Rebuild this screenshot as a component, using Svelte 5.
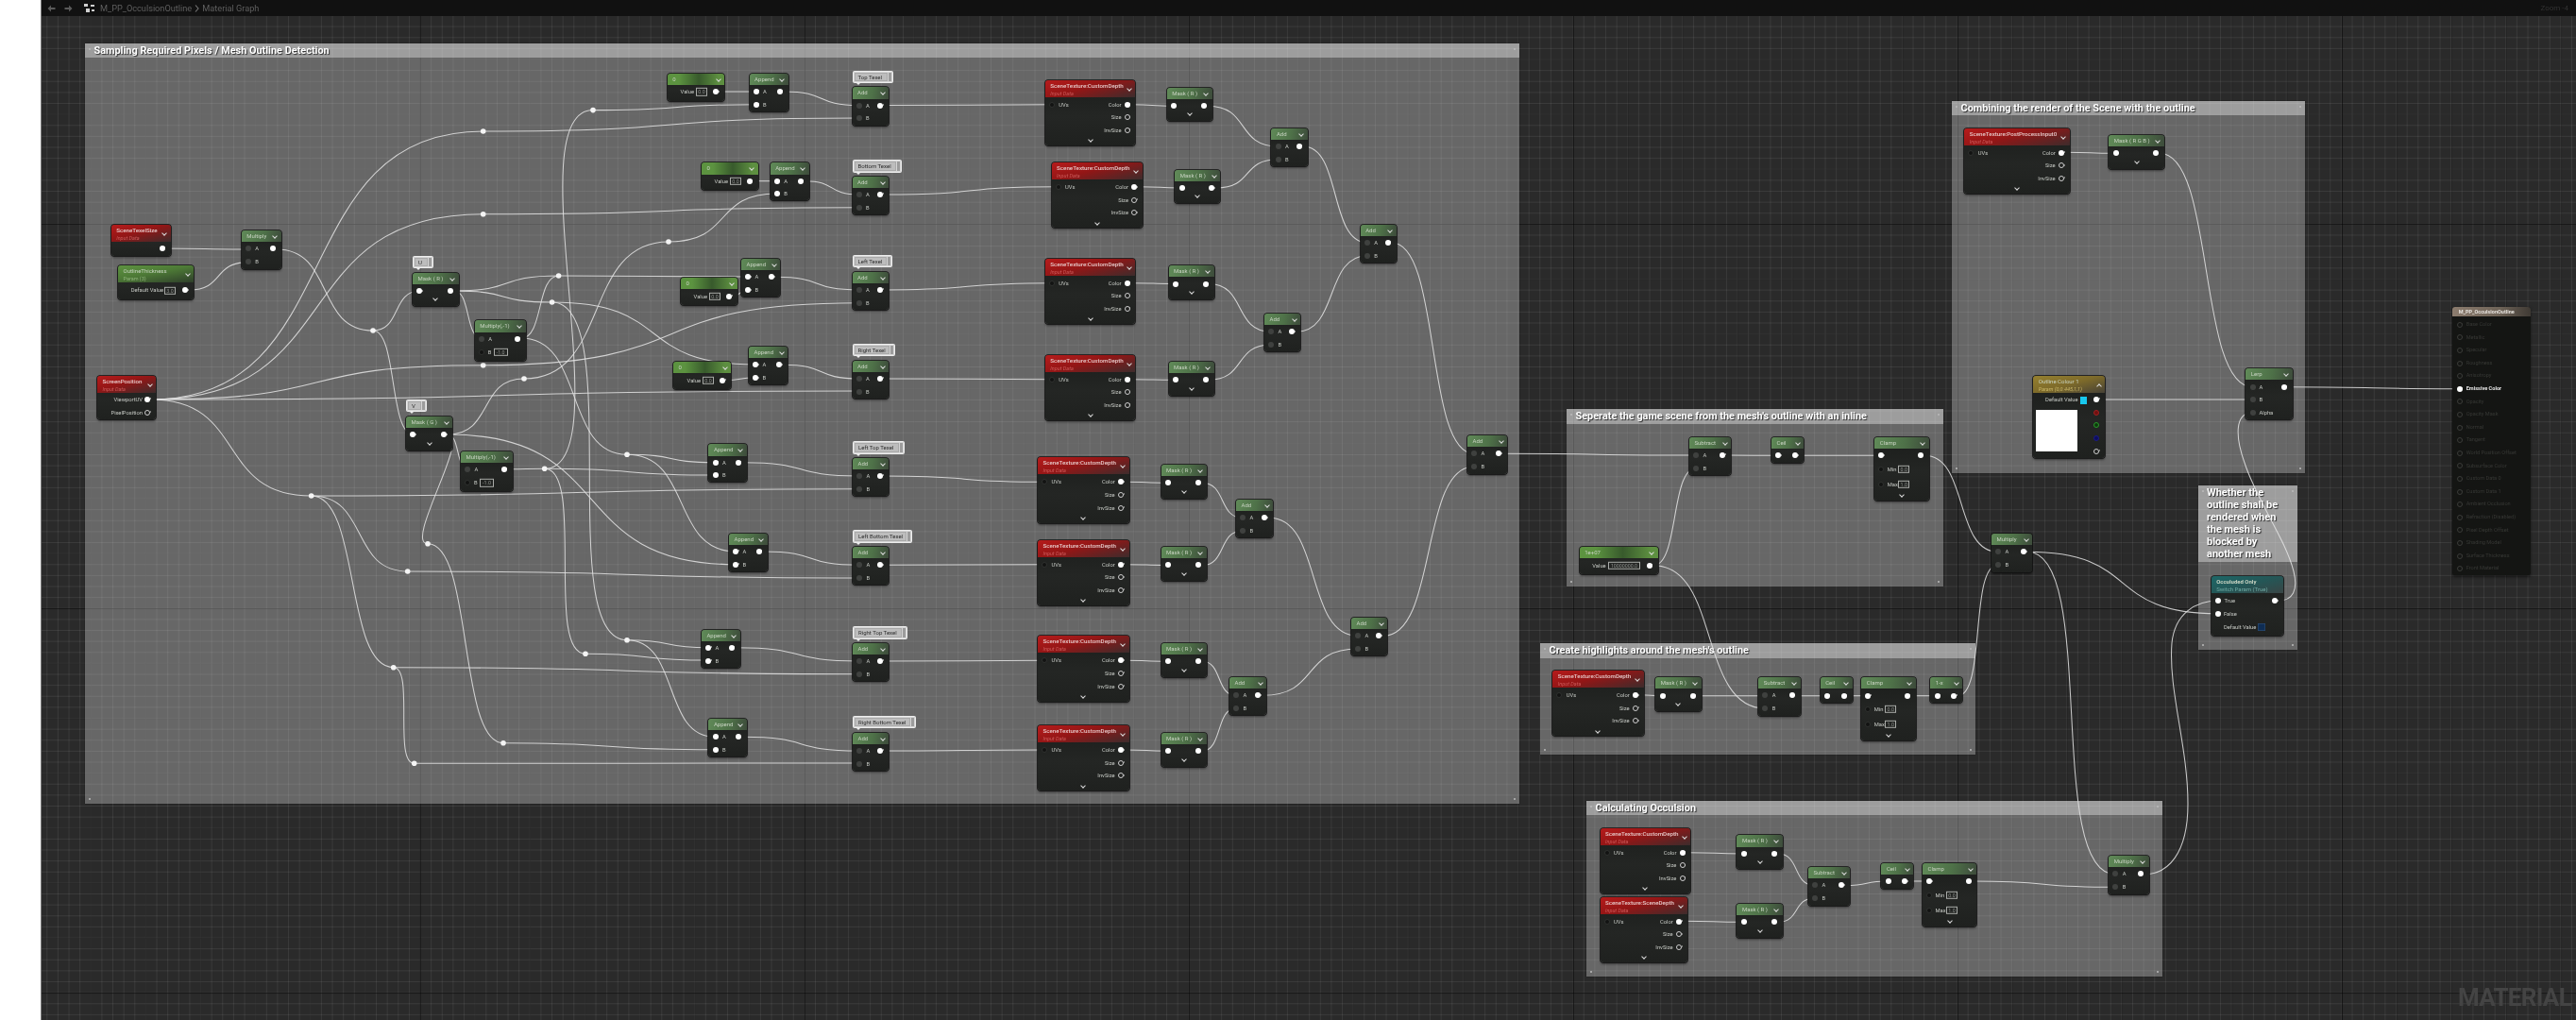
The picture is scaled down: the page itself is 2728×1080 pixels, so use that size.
<script>
  const comments = [
    { x: 90, y: 46, r: 1609, b: 851, hb: 61, s: 'Sampling Required Pixels / Mesh Outline Detection' },
    { x: 1659, y: 433, r: 2058, b: 621, hb: 449, s: "Seperate the game scene from the mesh's outline with an inline" },
    { x: 1631, y: 681, r: 2092, b: 799, hb: 697, s: "Create highlights around the mesh's outline" },
    { x: 1680, y: 848, r: 2290, b: 1034, hb: 863, s: 'Calculating Occulsion' },
    { x: 2067, y: 107, r: 2441, b: 501, hb: 122, s: 'Combining the render of the Scene with the outline' },
    { x: 2328, y: 514, r: 2433, b: 688, hb: 595, s: 'Whether the outline shall be rendered when the mesh is blocked by another mesh', big: true }
  ];

  const bubbles = [
    { x: 902.5, y: 74.7, r: 946.4, s: 'Top Texel' }, { x: 902.5, y: 169.3, r: 954.6, s: 'Bottom Texel' },
    { x: 902.5, y: 270, r: 945, s: 'Left Texel' }, { x: 902.5, y: 364, r: 948, s: 'Right Texel' },
    { x: 903, y: 467.3, r: 958, s: 'Left Top Texel' }, { x: 903, y: 561.3, r: 966.4, s: 'Left Bottom Texel' },
    { x: 903, y: 663.3, r: 961, s: 'Right Top Texel' }, { x: 903, y: 758, r: 969.6, s: 'Right Bottom Texel' },
    { x: 437, y: 271, r: 459, s: 'U' }, { x: 430, y: 423, r: 451.7, s: 'V' }
  ];

  const base = (hd, title, x, y, r, b, extra = {}) => ({ hd, title, x, y, w: r - x, h: b - y, hh: 12.3, pins: [], labels: [], boxes: [], chev: [], ...extra });

  function ab(title, x, y, r, b, fill = false) {
    const n = base('green', title, x, y, r, b);
    const ay = y + 19.3, by = y + 33;
    const t = fill ? 'o' : 'd';
    n.pins = [{ x: x + 7.2, y: ay, t }, { x: x + 7.2, y: by, t }, { x: r - 9, y: ay, t: 'o' }];
    n.labels = [{ x: x + 14.5, y: ay, s: 'A' }, { x: x + 14.5, y: by, s: 'B' }];
    return n;
  }
  function mask(title, x, y, r, b) {
    const n = base('green', title, x, y, r, b);
    const py = y + 19.5;
    n.pins = [{ x: x + 7.3, y: py, t: 'o' }, { x: r - 9, y: py, t: 'o' }];
    n.chev = [{ x: (x + r) / 2, y: b - 7 }];
    return n;
  }
  const one = (title, x, y) => {
    const n = base('green', title, x, y, x + 34, y + 27);
    n.pins = [{ x: x + 7.3, y: y + 19.5, t: 'o' }, { x: x + 25, y: y + 19.5, t: 'o' }];
    return n;
  };
  function clamp(x, y) {
    const n = base('green', 'Clamp', x, y, x + 57.4, y + 67);
    n.pins = [{ x: x + 7, y: y + 19.5, t: 'o' }, { x: x + 48.5, y: y + 19.5, t: 'o' }, { x: x + 7, y: y + 34, t: 'k' }, { x: x + 7, y: y + 50, t: 'k' }];
    n.labels = [{ x: x + 13.5, y: y + 34, s: 'Min' }, { x: x + 13.5, y: y + 50, s: 'Max' }];
    n.boxes = [{ x: x + 25, y: y + 34, w: 12, s: '0.0' }, { x: x + 25, y: y + 50, w: 12, s: '1.0' }];
    n.chev = [{ x: x + 29, y: y + 62 }];
    return n;
  }
  function st(title, x, y, r) {
    const n = base('red', title, x, y, r, y + 69.3, { hh: 18, sub: 'Input Data', pad: true });
    n.pins = [{ x: x + 7, y: y + 26, t: 'k' }, { x: r - 8.5, y: y + 26, t: 'o' }, { x: r - 8.5, y: y + 39.6, t: 'h' }, { x: r - 8.5, y: y + 53.3, t: 'h' }];
    n.labels = [{ x: x + 14.5, y: y + 26, s: 'UVs' }, { r: r - 15, y: y + 26, s: 'Color' }, { r: r - 15, y: y + 39.6, s: 'Size' }, { r: r - 15, y: y + 53.3, s: 'InvSize' }];
    n.chev = [{ x: (x + r) / 2, y: y + 64.5 }];
    return n;
  }
  function cnst(x, y, r, b, title, val, bx, bw) {
    const n = base('cnst', title, x, y, r, b);
    const py = y + 19.5;
    n.pins = [{ x: r - 9, y: py, t: 'o' }];
    n.labels = [{ r: bx - 2, y: py, s: 'Value' }];
    n.boxes = [{ x: bx, y: py, w: bw, s: val }];
    return n;
  }
  function mul1(x, y, r, b) {
    const n = ab('Multiply(,-1)', x, y, r, b);
    n.pins[1].t = 'k'; n.pins[1].y = y + 33.7;
    n.labels[1] = { x: x + 14, y: y + 33.7, s: 'B' };
    n.boxes = [{ x: x + 20, y: y + 33.7, w: 15, s: '-1.0' }];
    return n;
  }
  const M = 'Mask ( R )', CD = 'SceneTexture:CustomDepth';

  const stx = base('red', 'SceneTexelSize', 117.7, 237.7, 181, 270.7, { hh: 18, sub: 'Input Data', pad: true });
  stx.pins = [{ x: 172, y: 263, t: 'o' }];
  const oth = base('green2', 'OutlineThickness', 125, 281, 205, 316.7, { hh: 18, sub: 'Param (3)', subc: 'gsub', pad: true });
  oth.pins = [{ x: 196, y: 307, t: 'o' }];
  oth.labels = [{ x: 138.7, y: 307.3, s: 'Default Value' }];
  oth.boxes = [{ x: 174, y: 307.5, w: 12, s: '3.0' }];
  const spos = base('red', 'ScreenPosition', 103, 397.7, 165, 444, { hh: 18, sub: 'Input Data', pad: true });
  spos.pins = [{ x: 156, y: 423, t: 'o' }, { x: 156, y: 436.7, t: 'h' }];
  spos.labels = [{ r: 151, y: 423, s: 'ViewportUV' }, { r: 151, y: 436.7, s: 'PixelPosition' }];
  const ppi = st('SceneTexture:PostProcessInput0', 2080.3, 135.7, 2191.7);
  const col = base('gold', 'Outline Colour 1', 2153.3, 397.7, 2229.3, 485, { hh: 18, sub: 'Param (0,0.445,1,1)', subc: 'ysub', pad: true, up: true });
  col.pins = [{ x: 2220.3, y: 423, t: 'o' }, { x: 2220.3, y: 436.7, t: 'r' }, { x: 2220.3, y: 450.3, t: 'g' }, { x: 2220.3, y: 464, t: 'b' }, { x: 2220.3, y: 477.7, t: 'h' }];
  col.labels = [{ r: 2200.5, y: 423.5, s: 'Default Value' }];
  const lerp = base('green', 'Lerp', 2378.3, 390, 2427.7, 444);
  lerp.pins = [{ x: 2385.7, y: 409.7, t: 'd' }, { x: 2385.7, y: 423, t: 'd' }, { x: 2385.7, y: 436.7, t: 'd' }, { x: 2419, y: 409.7, t: 'o' }];
  lerp.labels = [{ x: 2392.5, y: 409.7, s: 'A' }, { x: 2392.5, y: 423, s: 'B' }, { x: 2392.5, y: 436.7, s: 'Alpha' }];
  const sw = base('teal', 'Occuluded Only', 2341.7, 610, 2418.3, 672.8, { hh: 18, sub: 'Switch Param (True)', subc: 'tsub', pad: true, noch: true, bold: true });
  sw.pins = [{ x: 2348.7, y: 636, t: 'o' }, { x: 2348.7, y: 649.8, t: 'o' }, { x: 2409.3, y: 636, t: 'o' }];
  sw.labels = [{ x: 2355.5, y: 636, s: 'True' }, { x: 2355, y: 649.8, s: 'False' }, { x: 2355, y: 664, s: 'Default Value' }];

  const nodes = [
    stx, oth, spos,
    ab('Multiply', 255.7, 244, 298, 285),
    mask('Mask ( R )', 437, 288.7, 485.7, 323.7), mask('Mask ( G )', 430, 440.7, 479, 476.7),
    mul1(502.7, 339.3, 557, 382), mul1(488, 477.7, 542.7, 520),
    cnst(706.8, 77.7, 767.5, 106.7, '0', '0.0', 737, 12), cnst(742.9, 172.3, 803, 201.3, '0', '0.0', 773, 12),
    cnst(721, 294, 781, 323, '0', '0.0', 751, 12), cnst(713, 383, 774, 412, '0', '0.0', 744, 12),
    ab('Append', 793.6, 77.7, 834.6, 117.7, true), ab('Append', 815.7, 172.3, 856.8, 212.3, true),
    ab('Append', 785, 274, 826, 314, true), ab('Append', 793, 367, 834, 407, true),
    ab('Append', 750.4, 470.3, 791, 510.3, true), ab('Append', 772, 564.7, 812.9, 604.7, true),
    ab('Append', 742.9, 666.7, 783.6, 706.7, true), ab('Append', 750.4, 761, 791, 801, true),
    ...[92.3, 186.7, 287.7, 381.6].map((y) => ab('Add', 902.5, y, 941.4, y + 40.3)),
    ...[484.7, 579, 680.7, 775.7].map((y) => ab('Add', 903, y, 941, y + 40.3)),
    st(CD, 1106.8, 84.7, 1202.5), st(CD, 1113.6, 172, 1210), st(CD, 1106.8, 273.7, 1202.5), st(CD, 1106.8, 375.7, 1202.5),
    ...[484.3, 571.7, 673.3, 768].map((y) => st(CD, 1099, y, 1195.7)),
    mask(M, 1235.7, 92.7, 1283.6, 127.7), mask(M, 1244.3, 179.7, 1292.5, 214.7), mask(M, 1237.5, 281, 1285.7, 316.7), mask(M, 1237.5, 382.7, 1285.7, 418.7),
    mask(M, 1229.6, 491.7, 1278, 527.7), mask(M, 1229.6, 578.7, 1278, 615), mask(M, 1229.6, 680.7, 1278, 716.7), mask(M, 1229.6, 775.7, 1278, 812),
    ab('Add', 1346.4, 135.7, 1384.6, 176), ab('Add', 1339, 332, 1377, 372.3), ab('Add', 1440.7, 237.7, 1478.6, 278),
    ab('Add', 1309, 529, 1348, 569), ab('Add', 1302, 717, 1341, 757), ab('Add', 1431, 654, 1469, 694),
    ab('Add', 1554, 461, 1596, 501.5),
    ab('Subtract', 1789, 462.7, 1833.3, 503), one('Ceil', 1876, 462.7), clamp(1985.3, 462.7),
    cnst(1672.7, 579, 1756, 608.3, '1e+07', '10000000.0', 1702.7, 34.6),
    st(CD, 1644.3, 710, 1740.7), mask(M, 1753.3, 717, 1801.7, 752.7), ab('Subtract', 1862.3, 717, 1907, 758),
    one('Ceil', 1927.7, 717), clamp(1971.3, 717), one('1-x', 2044.3, 717),
    ab('Multiply', 2109, 565, 2152, 605.5),
    st(CD, 1694.5, 876.7, 1790.4), st('SceneTexture:SceneDepth', 1694.5, 949.7, 1786.7),
    mask(M, 1839.4, 884.3, 1888, 920), mask(M, 1839.4, 956.7, 1888, 992.7),
    ab('Subtract', 1914.9, 918, 1959.4, 958.7), one('Ceil', 1992.4, 913.7), clamp(2036, 913.7),
    ab('Multiply', 2233.3, 906, 2275.7, 947.3),
    ppi, mask('Mask ( R G B )', 2233.3, 142.7, 2292, 179),
    col, lerp, sw
  ];

  const resultLabels = ['Base Color', 'Metallic', 'Specular', 'Roughness', 'Anisotropy', 'Emissive Color', 'Opacity', 'Opacity Mask', 'Normal', 'Tangent', 'World Position Offset', 'Subsurface Color', 'Custom Data 0', 'Custom Data 1', 'Ambient Occlusion', 'Refraction (Disabled)', 'Pixel Depth Offset', 'Shading Model', 'Surface Thickness', 'Front Material'];

  const dots = [[511.7, 139], [628, 116.6], [511.7, 226.7], [708, 256], [395, 350], [591.6, 292], [584.6, 320], [511.7, 386.7], [555, 401], [329.7, 525], [431.7, 605], [453, 575.7], [576.7, 496.3], [664, 481.3], [664, 677.7], [620, 692.3], [416.7, 706.7], [438.7, 808.3], [533, 786.7]];

  const V = [160, 423];
  const wires = [
    [172, 263, 262.7, 264], [200, 307, 262.7, 277.7], [293, 264, 395, 350], [395, 350, 444.7, 308], [395, 350, 437.7, 460],
    [...V, 511.7, 139], [...V, 511.7, 226.7], [...V, 511.7, 386.7], [...V, 910, 414], [...V, 329.7, 525],
    [511.7, 139, 910, 125], [511.7, 226.7, 910, 219.7], [511.7, 386.7, 910, 320.7],
    [329.7, 525, 910, 517.7], [329.7, 525, 431.7, 605], [431.7, 605, 910, 612], [329.7, 525, 416.7, 706.7], [416.7, 706.7, 910, 713.7], [416.7, 706.7, 438.7, 808.3], [438.7, 808.3, 910, 808],
    [481, 308, 510, 358], [481, 308, 584.6, 320], [481, 308, 591.6, 292], [552, 358, 591.6, 292], [552, 358, 664, 481.3],
    [584.6, 320, 800, 386], [584.6, 320, 664, 677.7], [591.6, 292, 792, 293],
    [474, 460, 555, 401], [555, 401, 708, 256], [708, 256, 822.9, 205], [474, 460, 779, 597.7], [474, 460, 495.7, 496.7], [474, 460, 453, 575.7], [453, 575.7, 533, 786.7], [533, 786.7, 757, 793.7],
    [538, 496.7, 576.7, 496.3], [576.7, 496.3, 628, 116.6], [628, 116.6, 800.7, 110.7], [576.7, 496.3, 757, 503], [576.7, 496.3, 620, 692.3], [620, 692.3, 750, 699],
    [664, 481.3, 757, 489.7], [664, 481.3, 779.3, 584], [664, 677.7, 750, 685.7], [664, 677.7, 757, 780.3],
    [763, 97, 800.7, 97], [799, 191.7, 822.9, 191.7], [775, 313.5, 792, 307.5], [768, 402.5, 800, 400],
    [829.7, 97, 910, 111.6], [852, 191.7, 910, 206], [821, 293.3, 910, 307], [829, 386.3, 910, 400.9], [786.5, 489.7, 910, 504], [808.3, 584, 910, 598.3], [779.4, 685.7, 910, 700], [786.5, 780.3, 910, 795],
    [936, 111.6, 1114, 110.7], [936, 206, 1121, 197.7], [936, 307, 1114, 299.7], [936, 400.9, 1114, 401.7], [936, 504, 1106, 510.3], [936, 598.3, 1106, 597.7], [936, 700, 1106, 699.3], [936, 795, 1106, 794],
    [1198, 110.7, 1242.5, 112.2], [1205, 197.7, 1251.4, 199], [1198, 299.7, 1244.6, 300.5], [1198, 401.7, 1244.6, 402.2],
    [1191, 510.3, 1237, 511.2], [1191, 597.7, 1237, 598.5], [1191, 699.3, 1237, 700.2], [1191, 794, 1237, 795.2],
    [1279, 112.2, 1353.6, 155], [1288, 199, 1353.6, 168.7], [1280, 300.5, 1346, 351.3], [1280, 402.2, 1346, 365],
    [1273, 511.2, 1316, 548.3], [1273, 598.5, 1316, 562], [1273, 700.2, 1309, 736.3], [1273, 795.2, 1309, 750],
    [1380, 155, 1448, 257], [1372.6, 351.3, 1448, 270.7], [1344, 548.3, 1438, 673.3], [1337, 736.3, 1438, 687],
    [1474, 257, 1561, 480.3], [1465, 673.3, 1561, 494],
    [1591, 480.3, 1796, 482], [1829, 482, 1883.3, 482.3], [1905, 482.3, 1992.3, 482.3], [1751, 598.7, 1796, 496], [1751, 598.7, 1869.3, 750],
    [1736, 735.7, 1760.7, 736.7], [1797, 736.7, 1869.3, 736.7], [1902, 736.7, 1935, 736.7], [1957, 736.7, 1978.7, 736.7], [2024, 736.7, 2051.7, 736.7],
    [2038, 482.3, 2116, 584.3], [2073, 736.7, 2116, 598],
    [2147, 584.3, 2348.7, 649.8], [2147, 584.3, 2240.2, 925.7],
    [1786, 902.7, 1846.7, 904], [1782, 975.3, 1846.7, 976.3], [1883, 904, 1921.8, 937.7], [1883, 976.3, 1921.8, 951], [1954, 937.7, 1999.8, 933], [2021, 933, 2043, 933], [2088, 933, 2240.2, 939.3],
    [2187, 161.3, 2240.3, 162.3], [2287, 162.3, 2385.7, 409.7], [2224, 423, 2385.7, 423], [2423, 409.7, 2605, 411.7]
  ];
  const curve = ([a, b, c, d]) => {
    const dx = c - a, t = Math.max(Math.abs(dx) * 0.6, Math.min(Math.abs(d - b) * 0.22, 85));
    return `M${a} ${b}C${a + t} ${b} ${c - t} ${d} ${c} ${d}`;
  };
  const paths = [
    ...wires.map(curve),
    'M2413 636C2428 636 2434 625 2429 605C2420 570 2390 530 2377 490C2368 465 2365 436.7 2386 436.7',
    'M2271 925.7C2295 925.7 2317 905 2317 851C2317 790 2296 730 2300 681C2303 650 2325 636 2349 636'
  ];
</script>

<div class="root">
  <aside class="strip"></aside>
  <main class="viewport">
    <div class="graph">
      {#each comments as c}
        <section class="comment" style="left:{c.x}px;top:{c.y}px;width:{c.r - c.x}px;height:{c.b - c.y}px">
          <h2 class="chead" class:big={c.big} style="height:{c.hb - c.y}px">{c.s}</h2>
          <i class="cd tl"></i><i class="cd tr"></i><i class="cd bl"></i><i class="cd br"></i>
        </section>
      {/each}

      <svg class="wires" width="2728" height="1080" viewBox="0 0 2728 1080">
        {#each paths as d}
          <path {d} />
        {/each}
        {#each dots as [cx, cy]}
          <circle {cx} {cy} r="2.8" />
        {/each}
      </svg>

      {#each bubbles as b}
        <div class="bubble" style="left:{b.x}px;top:{b.y}px;width:{b.r - b.x}px">
          <span class="btext">{b.s}</span>
          <span class="bside"></span>
        </div>
      {/each}

      {#each nodes as n}
        <article class="node" style="left:{n.x}px;top:{n.y}px;width:{n.w}px;height:{n.h}px">
          <header class="hd {n.hd}" style="height:{n.hh}px">
            <span class="title" class:bold={n.bold}>{n.title}</span>
            {#if n.sub}<span class="sub {n.subc || ''}">{n.sub}</span>{/if}
            {#if !n.noch}<i class="chev hchev" class:up={n.up}></i>{/if}
          </header>
          {#each n.pins as p}
            <i class="pin {p.t}" style="left:{p.x - n.x}px;top:{p.y - n.y}px"></i>
          {/each}
          {#each n.labels as l}
            {#if l.r}
              <span class="lbl" style="right:{n.x + n.w - l.r}px;top:{l.y - n.y}px">{l.s}</span>
            {:else}
              <span class="lbl" style="left:{l.x - n.x}px;top:{l.y - n.y}px">{l.s}</span>
            {/if}
          {/each}
          {#each n.boxes as b}
            <span class="vbox" style="left:{b.x - n.x}px;top:{b.y - n.y}px;width:{b.w}px">{b.s}</span>
          {/each}
          {#each n.chev as c}
            <i class="chev" style="left:{c.x - n.x}px;top:{c.y - n.y}px"></i>
          {/each}
          {#if n === col}
            <div class="swatch"></div>
            <div class="preview"></div>
          {/if}
          {#if n === sw}
            <span class="check"></span>
          {/if}
        </article>
      {/each}

      <article class="result">
        <header class="rhead">M_PP_OcculsionOutline</header>
        <ul class="rlist">
          {#each resultLabels as s, i}
            <li class:on={i === 5}><i class="pin {i === 5 ? 'o' : 'rh'}"></i><span>{s}</span></li>
          {/each}
        </ul>
      </article>
    </div>

    <nav class="topbar">
      <svg class="ic" width="9" height="8" viewBox="0 0 9 8"><path d="M4 0.5 0.5 4 4 7.5V5H8.5V3H4Z" fill="#5a5a5a" /></svg>
      <svg class="ic" width="9" height="8" viewBox="0 0 9 8"><path d="M5 0.5 8.5 4 5 7.5V5H0.5V3H5Z" fill="#5a5a5a" /></svg>
      <svg class="ic logo" width="11" height="10" viewBox="0 0 11 10"><path d="M0 0H4V3H0ZM7 1H11V3H7ZM2 5H6V9H2ZM8 6H11V8H8Z" fill="#cfcfcf" /></svg>
      <span class="crumb">M_PP_OcculsionOutline</span>
      <svg class="sep" width="5" height="8" viewBox="0 0 5 8"><path d="M1 0.5 4 4 1 7.5" fill="none" stroke="#777" stroke-width="1.1" /></svg>
      <span class="crumb">Material Graph</span>
      <span class="zoom">Zoom -4</span>
    </nav>
    <div class="watermark">MATERIAL</div>
  </main>
</div>

<style>
  :global(body) { margin: 0; background: #fff; }
  .root { display: flex; width: 2728px; height: 1080px; overflow: hidden; font-family: Roboto, "Liberation Sans", sans-serif; filter: blur(0.35px); }
  .strip { flex: 0 0 43px; background: #fff; border-right: 1px solid #7a7a7a; }
  .viewport { flex: 1; position: relative; overflow: hidden; background: #272727; }
  .graph {
    position: absolute; left: -44px; top: 0; width: 2728px; height: 1080px;
    background-color: #2a2a2a;
    background-image:
      linear-gradient(to right, rgba(0,0,0,.45) 1px, transparent 1px),
      linear-gradient(to bottom, rgba(0,0,0,.45) 1px, transparent 1px),
      linear-gradient(to right, rgba(0,0,0,.22) 1px, transparent 1px),
      linear-gradient(to bottom, rgba(0,0,0,.22) 1px, transparent 1px),
      linear-gradient(to right, rgba(255,255,255,.075) 1px, transparent 1px),
      linear-gradient(to bottom, rgba(255,255,255,.075) 1px, transparent 1px);
    background-size: 407.05px 407.05px, 407.05px 407.05px, 58.15px 58.15px, 58.15px 58.15px, 11.63px 11.63px, 11.63px 11.63px;
    background-position: 37.7px 0, 0 237px, 37.7px 0, 0 4.4px, 2.8px 0, 0 4.4px;
  }
  .topbar { position: absolute; left: 0; top: 0; right: 0; height: 17px; background: #111; display: flex; align-items: center; padding-left: 6px; box-sizing: border-box; }
  .ic { margin-right: 8.5px; flex: none; }
  .logo { margin-left: 4px; margin-right: 6px; }
  .crumb { font-size: 9.2px; color: #5f5f5f; white-space: nowrap; }
  .sep { margin: 0 3px; flex: none; }
  .zoom { margin-left: auto; margin-right: 8px; font-size: 8px; color: #333; }

  .comment { position: absolute; background: rgba(255,255,255,.285); box-shadow: 0 0 1px rgba(0,0,0,.6); }
  .chead { margin: 0; box-sizing: border-box; padding: 0 9.5px; background: rgba(255,255,255,.36); color: #fff; font: 700 10.9px/15px Roboto, sans-serif; text-shadow: 1px 1px 1px rgba(0,0,0,.75); white-space: nowrap; overflow: hidden; }
  .chead.big { white-space: normal; font-size: 11px; line-height: 13.1px; padding: 1px 14px 0 9px; }
  .cd { position: absolute; width: 2px; height: 2px; background: #bbb; border-radius: 50%; }
  .tl { left: 4px; top: 5px; } .tr { right: 4px; top: 5px; } .bl { left: 4px; bottom: 4px; } .br { right: 4px; bottom: 4px; }

  .wires { position: absolute; left: 0; top: 0; }
  .wires path { fill: none; stroke: #e4e4e4; stroke-width: 1.05; opacity: .85; }
  .wires circle { fill: #f4f4f4; }

  .bubble { position: absolute; height: 13.4px; box-sizing: border-box; background: #d5d5d5; border: 1px solid #ededed; border-radius: 1.5px; display: flex; align-items: center; padding: 1px; gap: 1px; }
  .bubble::after { content: ''; position: absolute; left: 3px; bottom: -3px; border: 2px solid transparent; border-top-color: #ededed; border-bottom: 0; }
  .btext { flex: 1; height: 100%; box-sizing: border-box; border: 1px solid #a9a9a9; background: #bdbdbd; color: #2b2b2b; font-size: 6px; line-height: 7.8px; padding-left: 3px; white-space: nowrap; overflow: hidden; }
  .bside { flex: 0 0 3px; height: 100%; background: #9c9c9c; }

  .node { position: absolute; border-radius: 3px; background: linear-gradient(#1b1d1b, #242624 55%, #1f211f); box-shadow: 0 0 0 .8px #111, 0 1.5px 2.5px rgba(0,0,0,.45); color: #c4c7c2; font-size: 6px; }
  .hd { position: relative; box-sizing: border-box; border-radius: 3px 3px 0 0; padding: 2px 0 0 5.5px; overflow: hidden; }
  .green { background: linear-gradient(100deg, #608a58, #4e7148 55%, #3d4b3b); }
  .green2 { background: linear-gradient(170deg, #5d9240, #4d7a36 45%, #2e3e2a); }
  .cnst { background: linear-gradient(90deg, #5c9340 0 20%, #385a2c 55%, #5d8f40 90%); }
  .red { background: linear-gradient(165deg, #b61b1b 0, #931616 45%, #3d2c2c 100%); }
  .gold { background: linear-gradient(165deg, #96802f, #7d6a2a 50%, #464136); }
  .teal { background: linear-gradient(165deg, #1d6767, #245757 50%, #394545); }
  .title { display: block; line-height: 8px; font-size: 6px; color: #c8d3c2; white-space: nowrap; }
  .title.bold { font-weight: 700; }
  .red .title { color: #e6c9c9; font-weight: 500; font-size: 6.2px; }
  .sub { display: block; line-height: 8px; font-size: 5.5px; font-style: italic; color: #cd5a5a; white-space: nowrap; }
  .sub.gsub { color: #8eb478; font-style: normal; }
  .sub.ysub { color: #cbb868; }
  .sub.tsub { color: #6fa9a3; font-style: normal; font-size: 6px; }
  .chev { position: absolute; width: 3px; height: 3px; margin: -3px 0 0 -2px; border-right: 1px solid #dcdcdc; border-bottom: 1px solid #dcdcdc; transform: rotate(45deg); }
  .hchev { right: 4.5px; top: 6px; margin: -2px 0 0 0; }
  .red .hchev, .gold .hchev, .green2 .hchev { top: 9px; }
  .chev.up { transform: rotate(225deg); margin-top: 0; }

  .pin { position: absolute; width: 6px; height: 6px; margin: -3px 0 0 -3px; border-radius: 50%; box-sizing: border-box; }
  .pin.o { background: #fff; }
  .pin.o::after, .pin.h::after, .pin.rh::after { content: ''; position: absolute; left: 5.5px; top: 1.5px; border-left: 1.5px solid #fff; border-top: 1.5px solid transparent; border-bottom: 1.5px solid transparent; }
  .pin.h { border: 1px solid #cfcfcf; background: #1e201e; }
  .pin.h::after { left: 4.5px; top: .5px; border-left-color: #cfcfcf; }
  .pin.d { background: #3f413f; }
  .pin.k { background: #121312; border: 1px solid #2f312f; }
  .pin.r { background: #6e1010; border: 1px solid #a02020; }
  .pin.g { background: #0d3a0d; border: 1px solid #2a9a2a; }
  .pin.b { background: #0d0d5e; border: 1px solid #1a1a86; }

  .lbl { position: absolute; transform: translateY(-50%); font-size: 5.8px; line-height: 8px; color: #c6c9c4; white-space: nowrap; }
  .vbox { position: absolute; transform: translateY(-50%); box-sizing: border-box; height: 8.4px; border: .7px solid #a9aba8; text-align: center; font-size: 5.3px; line-height: 6.9px; color: #8f928e; overflow: hidden; white-space: nowrap; }
  .swatch { position: absolute; left: 49.5px; top: 22.3px; width: 7.6px; height: 8px; background: #18c8ee; }
  .preview { position: absolute; left: 2.7px; top: 36.6px; width: 43.7px; height: 43.4px; background: #fff; }
  .check { position: absolute; left: 49.3px; top: 50px; width: 7.6px; height: 7.6px; background: #0f2d54; box-shadow: inset 0 0 0 .7px #2a4a70; }

  .result { position: absolute; left: 2596.7px; top: 325px; width: 83.3px; height: 284px; background: #141513; border-radius: 3px; box-shadow: 0 1.5px 3px rgba(0,0,0,.5); }
  .rhead { height: 10px; padding-left: 7px; background: linear-gradient(90deg, #8c7c6e, #6f6458 60%, #3f3a34); color: #e5e1dc; font-size: 5.5px; line-height: 10px; font-weight: 700; border-radius: 3px 3px 0 0; white-space: nowrap; }
  .rlist { list-style: none; margin: 0; padding: 2.1px 0 0; }
  .rlist li { position: relative; height: 13.6px; line-height: 13.6px; padding-left: 15px; font-size: 5.6px; color: #373835; white-space: nowrap; }
  .rlist li .pin { left: 8.3px; top: 6.8px; }
  .pin.rh { border: 1px solid #3a3b38; }
  .pin.rh::after { left: 4.5px; top: .5px; border-left-color: #3a3b38; }
  .rlist li.on { color: #e6e6e6; font-weight: 700; }

  .watermark { position: absolute; right: 5px; bottom: 10px; font: 700 26px/28px Roboto, sans-serif; color: #444; letter-spacing: -.7px; }
</style>
